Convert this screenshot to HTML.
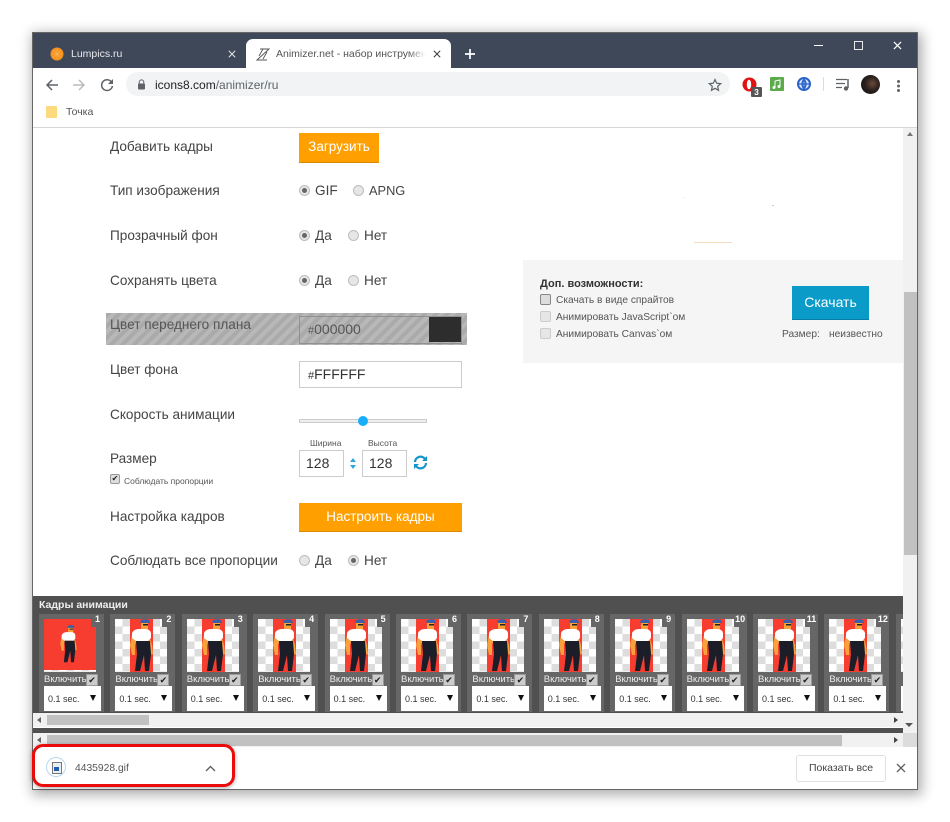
<!DOCTYPE html>
<html><head><meta charset="utf-8"><title>Animizer</title>
<style>
html,body{margin:0;padding:0;background:#fff}
body{width:950px;height:822px;position:relative;overflow:hidden;font-family:"Liberation Sans","DejaVu Sans",sans-serif;color:#3c4043}
.a{position:absolute}
.t{position:absolute;white-space:nowrap;line-height:16px}
.l{font-size:13.6px;color:#444;left:110px}
.o{font-size:13.6px;color:#444}
.r{position:absolute;width:9px;height:9px;border-radius:50%;background:#e6e6e6;border:1px solid #bdbdbd}
.r.c::after{content:"";position:absolute;left:2px;top:2px;width:5px;height:5px;border-radius:50%;background:#666}
.f{position:absolute;top:614px;width:65px;height:98px;background:#666}
.im{position:absolute;left:5px;top:5px;width:52px;height:53px;overflow:hidden;background-color:#fff;background-image:conic-gradient(#ddd 25%,#fff 0 50%,#ddd 0 75%,#fff 0);background-size:15px 15px}
.rd{position:absolute;left:15px;top:0;width:23px;height:53px;background:#f63d30}
.n{position:absolute;right:0;top:0;width:13px;height:13px;background:#666;color:#fff;font-size:9px;font-weight:bold;line-height:11px;text-align:center}
.m{position:absolute;left:15px;top:0;width:23px;height:53px}
.v{position:absolute;left:5px;top:60px;font-size:9.5px;line-height:12px;color:#eee;white-space:nowrap}
.k{position:absolute;left:47px;top:60px;width:10px;height:10px;background:#ccc;border:1px solid #999;color:#222;font-size:9px;line-height:10px;text-align:center}
.s{position:absolute;left:5px;top:72px;width:57px;height:25px;background:#fff;font-size:9px;line-height:26px;color:#333;text-indent:4px}
.s::after{content:"";position:absolute;left:46px;top:9px;border:3.5px solid transparent;border-top:6px solid #111;border-bottom:0}
.cb{position:absolute;left:540px;width:9px;height:9px;border:1px solid #aaa;border-radius:2px;background:#e6e6e6}
.sm{font-size:10.2px;color:#555}
</style></head><body>
<svg width="0" height="0" style="position:absolute"><symbol id="man" viewBox="0 0 23 53">
<path d="M2 16 L0 26 L2 36 L5 36 L5 26 L7 20Z" fill="#f9a23b"/>
<path d="M19 16 L22 26 L23 35 L20 36 L19 27 L17 20Z" fill="#f9a23b"/>
<path d="M11 3 H18 V11 H11Z" fill="#f9a23b"/>
<path d="M10 2 Q14 -1 19 1 L20 4 L11 4Z" fill="#3d5fa8"/>
<path d="M13 5 H18 V6.500 H13Z" fill="#222"/>
<path d="M2 14 Q4 10 9 10 H15 Q20 10 21 14 L21 19 L18 22 H6 L2 19Z" fill="#fff"/>
<path d="M6 22 H20 L21 35 L19 52 H15 L14 36 L10 52 H5 L7 35Z" fill="#1b1d28"/>
</symbol>
<symbol id="cross" viewBox="0 0 10 10"><path d="M1 1 L9 9 M9 1 L1 9" stroke="currentColor" stroke-width="1.3" fill="none"/></symbol>
</svg>
<!-- window -->
<div class="a" style="left:33px;top:33px;width:884px;height:756px;background:#fff;box-shadow:2px 3px 12px 3px rgba(0,0,0,.32);outline:1px solid #666"></div>
<div class="a" style="left:33px;top:33px;width:884px;height:35px;background:#3f4859"></div>
<!-- tab 1 -->
<svg class="a" style="left:50px;top:47px" width="14" height="14" viewBox="0 0 14 14"><circle cx="7" cy="7" r="6.500" fill="#f7931e"/><path d="M7 2V12M2 7H12M3.500 3.500L10.500 10.500M10.500 3.500L3.500 10.500" stroke="#fbb65c" stroke-width=".6"/></svg>
<div class="t" style="left:71px;top:46px;font-size:10.500px;color:#e8eaed">Lumpics.ru</div>
<svg class="a" style="left:228px;top:50px;color:#dfe1e5" width="8" height="8"><use href="#cross"/></svg>
<!-- tab 2 -->
<div class="a" style="left:246px;top:39px;width:205px;height:29px;background:#fff;border-radius:7px 7px 0 0"></div>
<svg class="a" style="left:256px;top:48px" width="14" height="13" viewBox="0 0 14 13"><path d="M4 1H13L1 12H11M3 8L7 1M7 11L11 4" stroke="#555" stroke-width=".9" fill="none"/></svg>
<div class="t" style="left:276px;top:46px;width:150px;overflow:hidden;font-size:10.500px;color:#555;-webkit-mask-image:linear-gradient(90deg,#000 88%,transparent)">Animizer.net - набор инструментов</div>
<svg class="a" style="left:433px;top:50px;color:#3c4043" width="8" height="8"><use href="#cross"/></svg>
<svg class="a" style="left:464px;top:48px" width="12" height="12" viewBox="0 0 12 12"><path d="M6 1V11M1 6H11" stroke="#fff" stroke-width="1.700"/></svg>
<!-- window controls -->
<div class="a" style="left:814px;top:45px;width:9px;height:1px;background:#fff"></div>
<div class="a" style="left:854px;top:41px;width:7px;height:7px;border:1px solid #e8eaed"></div>
<svg class="a" style="left:893px;top:41px;color:#fff" width="9" height="9"><use href="#cross"/></svg>
<!-- toolbar -->
<svg class="a" style="left:45px;top:78px" width="14" height="14" viewBox="0 0 14 14"><path d="M13 7H2M7 2L2 7L7 12" stroke="#5f6368" stroke-width="1.500" fill="none"/></svg>
<svg class="a" style="left:72px;top:78px" width="14" height="14" viewBox="0 0 14 14"><path d="M1 7H12M7 2L12 7L7 12" stroke="#b9bbbe" stroke-width="1.500" fill="none"/></svg>
<svg class="a" style="left:100px;top:78px" width="14" height="14" viewBox="0 0 14 14"><path d="M11.500 4A5.400 5.400 0 1 0 12.400 8" stroke="#5f6368" stroke-width="1.500" fill="none"/><path d="M13 1V6H8Z" fill="#5f6368"/></svg>
<div class="a" style="left:126px;top:72px;width:604px;height:24px;border-radius:12px;background:#f1f3f4"></div>
<svg class="a" style="left:137px;top:79px" width="9" height="11" viewBox="0 0 9 11"><path d="M2.200 5V3.200A2.300 2.300 0 0 1 6.800 3.200V5" stroke="#5f6368" fill="none"/><rect x="1" y="4.500" width="7" height="6" rx="1" fill="#5f6368"/></svg>
<div class="t" style="left:155px;top:77px;font-size:12px;color:#5f6368"><span style="color:#202124">icons8.com</span>/animizer/ru</div>
<svg class="a" style="left:708px;top:78px" width="14" height="14" viewBox="0 0 14 14"><path d="M7 1.500L8.700 5.200L12.700 5.600L9.700 8.300L10.500 12.300L7 10.300L3.500 12.300L4.300 8.300L1.300 5.600L5.300 5.200Z" stroke="#5f6368" stroke-width="1.200" fill="none"/></svg>
<!-- extensions -->
<svg class="a" style="left:742px;top:77px" width="22" height="20" viewBox="0 0 22 20"><ellipse cx="7.500" cy="7.500" rx="7" ry="7" fill="#e31212"/><ellipse cx="7" cy="7.500" rx="2.200" ry="4.800" fill="#fff"/><rect x="9" y="10" width="11" height="10" rx="1" fill="#555"/><text x="14.500" y="18" font-size="8.500" font-weight="bold" text-anchor="middle" fill="#fff" font-family="Liberation Sans">3</text></svg>
<svg class="a" style="left:770px;top:77px" width="14" height="14" viewBox="0 0 14 14"><rect width="14" height="14" rx="1" fill="#5bab4b"/><path d="M5 10V4L10 3V9" stroke="#fff" fill="none"/><circle cx="4" cy="10.500" r="1.500" fill="#fff"/><circle cx="9" cy="9.500" r="1.500" fill="#fff"/></svg>
<svg class="a" style="left:797px;top:77px" width="14" height="14" viewBox="0 0 14 14"><circle cx="7" cy="7" r="7" fill="#2a63c9"/><circle cx="7" cy="7" r="5" fill="#dfe9fa"/><path d="M7 1V13M1.500 7H12.500M7 2Q3 7 7 12M7 2Q11 7 7 12" stroke="#2a63c9" stroke-width="1.300" fill="none"/></svg>
<div class="a" style="left:823px;top:77px;width:1px;height:14px;background:#dadce0"></div>
<svg class="a" style="left:836px;top:78px" width="15" height="13" viewBox="0 0 15 13"><path d="M0 1.500H11M0 5.500H9M0 9.500H6" stroke="#5f6368" stroke-width="1.200"/><path d="M12 1V10" stroke="#5f6368" stroke-width="1.500"/><circle cx="10" cy="10.500" r="2.200" fill="#5f6368"/></svg>
<div class="a" style="left:861px;top:75px;width:19px;height:19px;border-radius:50%;background:radial-gradient(circle at 60% 45%,#6a4a3a 0,#2b211e 45%,#0d0d0d 100%)"></div>
<div class="a" style="left:897px;top:80px;width:3px;height:3px;border-radius:50%;background:#5f6368;box-shadow:0 4.500px 0 #5f6368,0 9px 0 #5f6368"></div>
<!-- bookmarks -->
<div class="a" style="left:46px;top:106px;width:11px;height:12px;background:#fcd97c;border-radius:1px"></div>
<div class="t" style="left:66px;top:104px;font-size:10.500px;color:#555">Точка</div>
<div class="a" style="left:33px;top:127px;width:884px;height:1px;background:#d6d7d9"></div>

<!-- form -->
<div class="t l" style="top:139px">Добавить кадры</div>
<div class="a" style="left:299px;top:133px;width:80px;height:29px;background:#ffa000;border-bottom:1px solid #d98a00;color:#fff;font-size:13.500px;line-height:27px;text-align:center">Загрузить</div>
<div class="t l" style="top:183px">Тип изображения</div>
<div class="r c" style="left:299px;top:185px"></div><div class="t o" style="left:315px;top:183px">GIF</div>
<div class="r" style="left:353px;top:185px"></div><div class="t o" style="left:369px;top:183px;font-size:12.800px">APNG</div>
<div class="t l" style="top:228px">Прозрачный фон</div>
<div class="r c" style="left:299px;top:230px"></div><div class="t o" style="left:315px;top:228px">Да</div>
<div class="r" style="left:348px;top:230px"></div><div class="t o" style="left:364px;top:228px">Нет</div>
<div class="t l" style="top:273px">Сохранять цвета</div>
<div class="r c" style="left:299px;top:275px"></div><div class="t o" style="left:315px;top:273px">Да</div>
<div class="r" style="left:348px;top:275px"></div><div class="t o" style="left:364px;top:273px">Нет</div>

<div class="a" style="left:106px;top:313px;width:361px;height:32px;background:repeating-linear-gradient(135deg,#aaa 0 4px,#b8b8b8 4px 8px)"></div>
<div class="t l" style="top:317px;color:#555">Цвет переднего плана</div>
<div class="a" style="left:299px;top:316px;width:161px;height:26px;border:1px solid #909090"></div>
<div class="t" style="left:308px;top:321px;font-size:14px;color:#555"><span style="font-size:11px">#</span>000000</div>
<div class="a" style="left:429px;top:317px;width:32px;height:25px;background:#2d2d2d"></div>

<div class="t l" style="top:362px">Цвет фона</div>
<div class="a" style="left:299px;top:361px;width:161px;height:25px;border:1px solid #ccc"></div>
<div class="t" style="left:308px;top:366px;font-size:14px;color:#333"><span style="font-size:11px">#</span>FFFFFF</div>
<div class="t l" style="top:407px">Скорость анимации</div>
<div class="a" style="left:299px;top:419px;width:126px;height:2px;border:1px solid #ccc;background:#eee"></div>
<div class="a" style="left:358px;top:416px;width:10px;height:10px;border-radius:50%;background:#18aefc"></div>
<div class="t" style="left:310px;top:435px;font-size:8.500px;color:#555">Ширина</div>
<div class="t" style="left:368px;top:435px;font-size:8.500px;color:#555">Высота</div>
<div class="t l" style="top:451px">Размер</div>
<div class="a" style="left:299px;top:450px;width:43px;height:25px;border:1px solid #ccc;font-size:14px;line-height:25px;color:#333;text-indent:6px">128</div>
<div class="a" style="left:362px;top:450px;width:43px;height:25px;border:1px solid #ccc;font-size:14px;line-height:25px;color:#333;text-indent:6px">128</div>
<svg class="a" style="left:350px;top:458px" width="6" height="11" viewBox="0 0 6 11"><path d="M3 0L6 4H0ZM3 11L0 7H6Z" fill="#2ea7e0"/></svg>
<svg class="a" style="left:413px;top:455px" width="15" height="15" viewBox="0 0 15 15"><path d="M2 7A5.500 5.500 0 0 1 12 4M13 8A5.500 5.500 0 0 1 3 11" stroke="#1595c9" stroke-width="2.200" fill="none"/><path d="M14 1V6H9ZM1 14V9H6Z" fill="#1595c9"/></svg>
<div class="a" style="left:110px;top:474px;width:8px;height:8px;background:#ddd;border:1px solid #999;border-radius:2px;font-size:8px;line-height:8px;color:#222;text-align:center">✔</div>
<div class="t" style="left:124px;top:473px;font-size:8.500px;color:#555">Соблюдать пропорции</div>
<div class="t l" style="top:509px">Настройка кадров</div>
<div class="a" style="left:299px;top:503px;width:163px;height:28px;background:#ffa000;border-bottom:1px solid #d98a00;color:#fff;font-size:13.500px;line-height:27px;text-align:center">Настроить кадры</div>
<div class="t l" style="top:553px">Соблюдать все пропорции</div>
<div class="r" style="left:299px;top:555px"></div><div class="t o" style="left:315px;top:553px">Да</div>
<div class="r c" style="left:348px;top:555px"></div><div class="t o" style="left:364px;top:553px">Нет</div>

<!-- right panel -->
<div class="a" style="left:683px;top:197px;width:1px;height:1px;background:#ddd"></div>
<div class="a" style="left:772px;top:205px;width:2px;height:1px;background:#ccc"></div>
<div class="a" style="left:694px;top:242px;width:38px;height:1px;background:#f3dcc0"></div>
<div class="a" style="left:523px;top:260px;width:380px;height:103px;background:#f5f5f5"></div>
<div class="t" style="left:540px;top:276px;font-size:11px;font-weight:bold;color:#333">Доп. возможности:</div>
<div class="cb" style="top:294px;background:#ddd;border-color:#888"></div>
<div class="t sm" style="left:556px;top:293px">Скачать в виде спрайтов</div>
<div class="cb" style="top:311px;border-color:#ccc"></div>
<div class="t sm" style="left:556px;top:310px">Анимировать JavaScript`ом</div>
<div class="cb" style="top:328px;border-color:#ccc"></div>
<div class="t sm" style="left:556px;top:327px">Анимировать Canvas`ом</div>
<div class="a" style="left:792px;top:286px;width:77px;height:33px;background:#0a9bc9;border-bottom:1px solid #0780a8;color:#fff;font-size:14px;line-height:33px;text-align:center">Скачать</div>
<div class="t sm" style="left:782px;top:327px">Размер:</div>
<div class="t sm" style="left:829px;top:327px">неизвестно</div>

<!-- page scrollbar -->
<div class="a" style="left:903px;top:128px;width:14px;height:619px;background:#f1f1f1"></div>
<div class="a" style="left:904px;top:292px;width:13px;height:263px;background:#c1c1c1"></div>
<div class="a" style="left:907px;top:132px;border:3.500px solid transparent;border-bottom:4px solid #777;border-top:0"></div>

<!-- frames panel -->
<div class="a" style="left:33px;top:596px;width:870px;height:117px;background:#505050;overflow:hidden">
<div class="t" style="left:6px;top:1px;font-size:10.500px;font-weight:bold;color:#eee;line-height:16px">Кадры анимации</div>
</div>
<div class="a" style="left:33px;top:596px;width:870px;height:117px;overflow:hidden">
<div style="position:absolute;left:-33px;top:-596px;width:950px;height:822px">
<div class="f" style="left:39px"><div class="im"><div style="position:absolute;inset:0 0 2px 0;background:#f63d30"></div><svg class="m" style="left:16px;top:6px;width:17px;height:38px"><use href="#man"/></svg></div><div class="n">1</div><div class="v">Включить</div><div class="k">✔</div><div class="s">0.1 sec.</div></div>
<div class="f" style="left:110.400px"><div class="im"><div class="rd"></div><svg class="m"><use href="#man"/></svg></div><div class="n">2</div><div class="v">Включить</div><div class="k">✔</div><div class="s">0.1 sec.</div></div>
<div class="f" style="left:181.800px"><div class="im"><div class="rd"></div><svg class="m"><use href="#man"/></svg></div><div class="n">3</div><div class="v">Включить</div><div class="k">✔</div><div class="s">0.1 sec.</div></div>
<div class="f" style="left:253.200px"><div class="im"><div class="rd"></div><svg class="m"><use href="#man"/></svg></div><div class="n">4</div><div class="v">Включить</div><div class="k">✔</div><div class="s">0.1 sec.</div></div>
<div class="f" style="left:324.600px"><div class="im"><div class="rd"></div><svg class="m"><use href="#man"/></svg></div><div class="n">5</div><div class="v">Включить</div><div class="k">✔</div><div class="s">0.1 sec.</div></div>
<div class="f" style="left:396px"><div class="im"><div class="rd"></div><svg class="m"><use href="#man"/></svg></div><div class="n">6</div><div class="v">Включить</div><div class="k">✔</div><div class="s">0.1 sec.</div></div>
<div class="f" style="left:467.400px"><div class="im"><div class="rd"></div><svg class="m"><use href="#man"/></svg></div><div class="n">7</div><div class="v">Включить</div><div class="k">✔</div><div class="s">0.1 sec.</div></div>
<div class="f" style="left:538.800px"><div class="im"><div class="rd"></div><svg class="m"><use href="#man"/></svg></div><div class="n">8</div><div class="v">Включить</div><div class="k">✔</div><div class="s">0.1 sec.</div></div>
<div class="f" style="left:610.200px"><div class="im"><div class="rd"></div><svg class="m"><use href="#man"/></svg></div><div class="n">9</div><div class="v">Включить</div><div class="k">✔</div><div class="s">0.1 sec.</div></div>
<div class="f" style="left:681.600px"><div class="im"><div class="rd"></div><svg class="m"><use href="#man"/></svg></div><div class="n">10</div><div class="v">Включить</div><div class="k">✔</div><div class="s">0.1 sec.</div></div>
<div class="f" style="left:753px"><div class="im"><div class="rd"></div><svg class="m"><use href="#man"/></svg></div><div class="n">11</div><div class="v">Включить</div><div class="k">✔</div><div class="s">0.1 sec.</div></div>
<div class="f" style="left:824.400px"><div class="im"><div class="rd"></div><svg class="m"><use href="#man"/></svg></div><div class="n">12</div><div class="v">Включить</div><div class="k">✔</div><div class="s">0.1 sec.</div></div>
<div class="f" style="left:895.800px"><div class="im"><div class="rd"></div></div><div class="s"></div></div>
</div></div>

<!-- inner scrollbar -->
<div class="a" style="left:33px;top:713px;width:870px;height:14px;background:#f1f1f1"></div>
<div class="a" style="left:47px;top:715px;width:102px;height:10px;background:#c1c1c1"></div>
<div class="a" style="left:37px;top:717px;border:3.500px solid transparent;border-right:4px solid #666;border-left:0"></div>
<div class="a" style="left:894px;top:717px;border:3.500px solid transparent;border-left:4px solid #444;border-right:0"></div>
<div class="a" style="left:905px;top:723px;border:4px solid transparent;border-top:4px solid #555;border-bottom:0"></div>
<div class="a" style="left:33px;top:728px;width:870px;height:5px;background:#505050"></div>
<!-- outer scrollbar -->
<div class="a" style="left:33px;top:733px;width:870px;height:14px;background:#f1f1f1"></div>
<div class="a" style="left:47px;top:735px;width:795px;height:11px;background:#c1c1c1"></div>
<div class="a" style="left:37px;top:737px;border:3.500px solid transparent;border-right:4px solid #666;border-left:0"></div>
<div class="a" style="left:894px;top:737px;border:3.500px solid transparent;border-left:4px solid #444;border-right:0"></div>
<div class="a" style="left:903px;top:733px;width:14px;height:14px;background:#dcdcdc"></div>

<!-- download bar -->
<div class="a" style="left:33px;top:747px;width:884px;height:42px;background:#fff"></div>
<div class="a" style="left:46px;top:757px;width:18px;height:18px;border:1px solid #b5d8f3;border-radius:50%"></div>
<div class="a" style="left:52px;top:762px;width:8px;height:10px;background:#e9eef5;border:1px solid #777"></div>
<div class="a" style="left:54px;top:767px;width:5px;height:4px;background:#1f5fb0"></div>
<div class="t" style="left:75px;top:761px;font-size:10.300px;color:#555">4435928.gif</div>
<svg class="a" style="left:205px;top:765px" width="11" height="7" viewBox="0 0 11 7"><path d="M1 6L5.500 1.500L10 6" stroke="#5f6368" stroke-width="1.400" fill="none"/></svg>
<div class="a" style="left:796px;top:755px;width:88px;height:25px;border:1px solid #e0e0e0;border-radius:3px;font-size:10.500px;line-height:25px;text-align:center;color:#444;background:#fff">Показать все</div>
<svg class="a" style="left:896px;top:763px;color:#5f6368" width="10" height="10"><use href="#cross"/></svg>
<!-- red annotation -->
<div class="a" style="left:32px;top:744px;width:197px;height:37px;border:3.500px solid #ea0b0b;border-radius:11px;box-shadow:0 1px 4px rgba(0,0,0,.35)"></div>
</body></html>
